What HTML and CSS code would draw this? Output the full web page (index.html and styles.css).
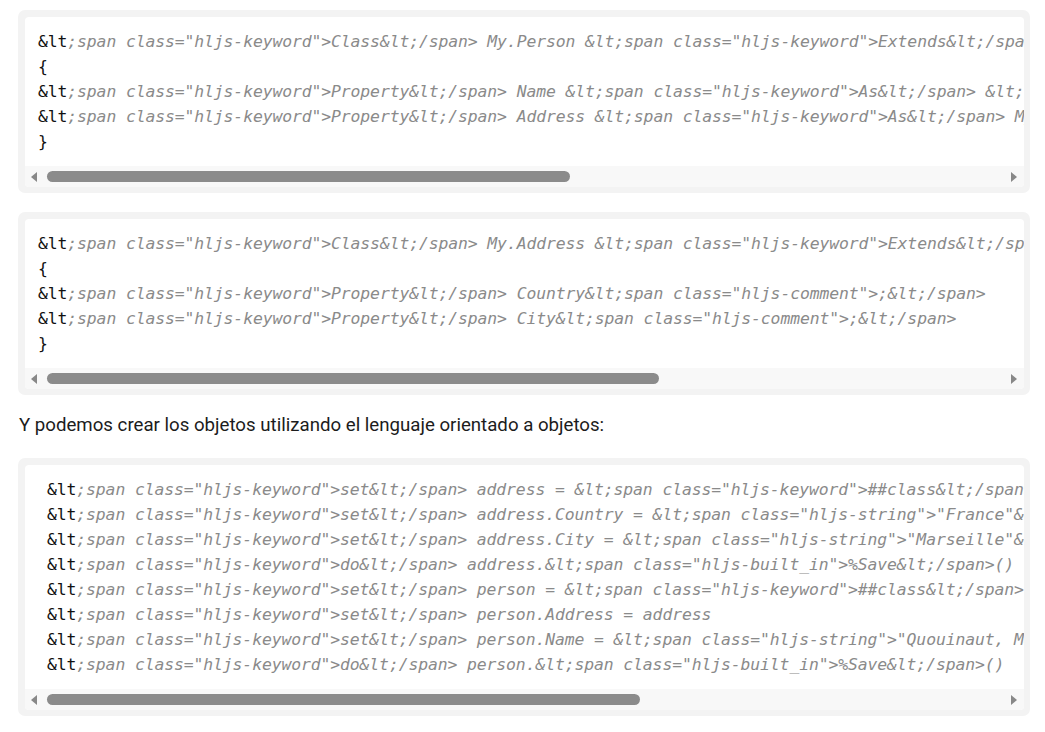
FILE: index.html
```html
<!DOCTYPE html>
<html lang="es">
<head>
<meta charset="utf-8">
<title>Código</title>
<link rel="stylesheet" href="styles.css">
</head>
<body>
<main class="page">
  <div class="code-box">
    <div class="code-inner">
<pre class="code"><span class="plain">&amp;lt</span><span class="cmt">;span class="hljs-keyword"&gt;Class&amp;lt;/span&gt; My.Person &amp;lt;span class="hljs-keyword"&gt;Extends&amp;lt;/span&gt; %Persistent</span>
<span class="plain">{</span>
<span class="plain">&amp;lt</span><span class="cmt">;span class="hljs-keyword"&gt;Property&amp;lt;/span&gt; Name &amp;lt;span class="hljs-keyword"&gt;As&amp;lt;/span&gt; &amp;lt;span class="hljs-built_in"&gt;%String&amp;lt;/span&gt;;</span>
<span class="plain">&amp;lt</span><span class="cmt">;span class="hljs-keyword"&gt;Property&amp;lt;/span&gt; Address &amp;lt;span class="hljs-keyword"&gt;As&amp;lt;/span&gt; My.Address;</span>
<span class="plain">}</span></pre>
      <div class="hscroll">
        <span class="arrow arrow-left"></span>
        <div class="track"><div class="thumb" style="width:523px"></div></div>
        <span class="arrow arrow-right"></span>
      </div>
    </div>
  </div>

  <div class="code-box">
    <div class="code-inner">
<pre class="code"><span class="plain">&amp;lt</span><span class="cmt">;span class="hljs-keyword"&gt;Class&amp;lt;/span&gt; My.Address &amp;lt;span class="hljs-keyword"&gt;Extends&amp;lt;/span&gt; %Persistent</span>
<span class="plain">{</span>
<span class="plain">&amp;lt</span><span class="cmt">;span class="hljs-keyword"&gt;Property&amp;lt;/span&gt; Country&amp;lt;span class="hljs-comment"&gt;;&amp;lt;/span&gt;</span>
<span class="plain">&amp;lt</span><span class="cmt">;span class="hljs-keyword"&gt;Property&amp;lt;/span&gt; City&amp;lt;span class="hljs-comment"&gt;;&amp;lt;/span&gt;</span>
<span class="plain">}</span></pre>
      <div class="hscroll">
        <span class="arrow arrow-left"></span>
        <div class="track"><div class="thumb" style="width:612px"></div></div>
        <span class="arrow arrow-right"></span>
      </div>
    </div>
  </div>

  <p class="text">Y podemos crear los objetos utilizando el lenguaje orientado a objetos:</p>

  <div class="code-box">
    <div class="code-inner">
<pre class="code code-indented"><span class="plain">&amp;lt</span><span class="cmt">;span class="hljs-keyword"&gt;set&amp;lt;/span&gt; address = &amp;lt;span class="hljs-keyword"&gt;##class&amp;lt;/span&gt;(My.Address).%New()</span>
<span class="plain">&amp;lt</span><span class="cmt">;span class="hljs-keyword"&gt;set&amp;lt;/span&gt; address.Country = &amp;lt;span class="hljs-string"&gt;"France"&amp;lt;/span&gt;</span>
<span class="plain">&amp;lt</span><span class="cmt">;span class="hljs-keyword"&gt;set&amp;lt;/span&gt; address.City = &amp;lt;span class="hljs-string"&gt;"Marseille"&amp;lt;/span&gt;</span>
<span class="plain">&amp;lt</span><span class="cmt">;span class="hljs-keyword"&gt;do&amp;lt;/span&gt; address.&amp;lt;span class="hljs-built_in"&gt;%Save&amp;lt;/span&gt;()</span>
<span class="plain">&amp;lt</span><span class="cmt">;span class="hljs-keyword"&gt;set&amp;lt;/span&gt; person = &amp;lt;span class="hljs-keyword"&gt;##class&amp;lt;/span&gt;(My.Person).%New()</span>
<span class="plain">&amp;lt</span><span class="cmt">;span class="hljs-keyword"&gt;set&amp;lt;/span&gt; person.Address = address</span>
<span class="plain">&amp;lt</span><span class="cmt">;span class="hljs-keyword"&gt;set&amp;lt;/span&gt; person.Name = &amp;lt;span class="hljs-string"&gt;"Quouinaut, Marcel"&amp;lt;/span&gt;</span>
<span class="plain">&amp;lt</span><span class="cmt">;span class="hljs-keyword"&gt;do&amp;lt;/span&gt; person.&amp;lt;span class="hljs-built_in"&gt;%Save&amp;lt;/span&gt;()</span></pre>
      <div class="hscroll">
        <span class="arrow arrow-left"></span>
        <div class="track"><div class="thumb" style="width:593px"></div></div>
        <span class="arrow arrow-right"></span>
      </div>
    </div>
  </div>
</main>
</body>
</html>
```

FILE: styles.css
```css
* {
  box-sizing: border-box;
}

html, body {
  margin: 0;
  padding: 0;
  background: #ffffff;
}

.page {
  padding: 10px 15px 0 18px;
  display: flex;
  flex-direction: column;
}

.code-box {
  background: #f3f3f3;
  border-radius: 7px;
  padding: 7px 6px 6px 7px;
  margin-bottom: 19px;
}

.code-inner {
  background: #ffffff;
  border-radius: 4px;
  overflow: hidden;
}

.code {
  margin: 0;
  padding: 12px 13px;
  font-family: "DejaVu Sans Mono", "Liberation Mono", monospace;
  font-size: 16.4px;
  letter-spacing: -0.1px;
  line-height: 25px;
  white-space: pre;
  overflow: hidden;
  color: #111111;
}

.code-indented {
  padding-left: 22px;
}

.plain {
  color: #111111;
  font-style: normal;
}

.cmt {
  color: #8a8a8a;
  font-style: italic;
}

.hscroll {
  height: 21px;
  background: #f8f8f8;
  display: flex;
  align-items: center;
  padding: 0 7px 0 6px;
}

.arrow {
  width: 0;
  height: 0;
  border-top: 5px solid transparent;
  border-bottom: 5px solid transparent;
  flex: none;
}

.arrow-left {
  border-right: 6px solid #888888;
}

.arrow-right {
  border-left: 6px solid #888888;
}

.track {
  flex: 1;
  margin: 0 10px;
  height: 11px;
  display: flex;
}

.thumb {
  height: 11px;
  background: #8b8b8b;
  border-radius: 6px;
}

.text {
  font-family: Roboto, "Liberation Sans", sans-serif;
  font-size: 18.66px;
  line-height: 26px;
  color: #1c1c1c;
  margin: -2px 0 20px 1px;
}
```
